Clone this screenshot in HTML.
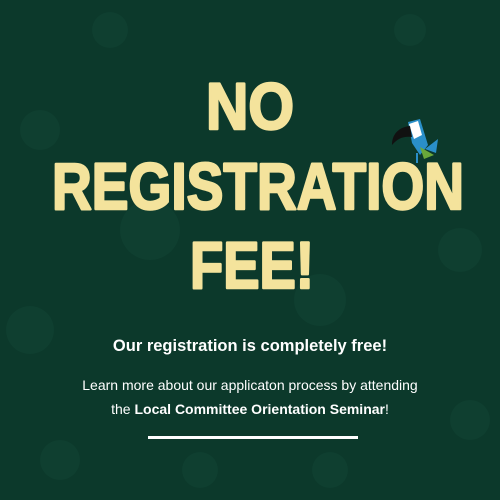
<!DOCTYPE html>
<html><head><meta charset="utf-8"><style>
html,body{margin:0;padding:0}
body{width:500px;height:500px;background:#0c392b;position:relative;overflow:hidden;font-family:"Liberation Sans",sans-serif}
.t{position:absolute;left:0;width:500px;text-align:center;color:#fff}
</style></head><body>
<svg width="500" height="500" style="position:absolute;left:0;top:0">
<g fill="#0f3f30">
<circle cx="110" cy="30" r="18"/><circle cx="410" cy="30" r="16"/><circle cx="40" cy="130" r="20"/>
<circle cx="460" cy="250" r="22"/><circle cx="30" cy="330" r="24"/><circle cx="470" cy="420" r="20"/>
<circle cx="60" cy="460" r="20"/><circle cx="200" cy="470" r="18"/><circle cx="330" cy="470" r="18"/>
<circle cx="150" cy="230" r="30"/><circle cx="320" cy="300" r="26"/>
</g>
<g font-family="Liberation Sans, sans-serif" font-weight="bold" fill="#f4e39c" stroke="#f4e39c" stroke-width="2.5" stroke-linejoin="round">
<text x="206" y="129" font-size="66" textLength="88" lengthAdjust="spacingAndGlyphs">NO</text>
<text x="52" y="209" font-size="66" textLength="412" lengthAdjust="spacingAndGlyphs">REGISTRATION</text>
<text x="190" y="288" font-size="66" textLength="124" lengthAdjust="spacingAndGlyphs">FEE!</text>
</g>
<g transform="translate(370,115)">
<path d="M38 7 L50 4 L58 30 L50 40 L42 28 Z" fill="#2a8fc9"/>
<path d="M39 9 L48 6 L52 20 L44 24 Z" fill="#fff"/>
<path d="M40 11 C30 12 22 18 22 30 C28 23 34 21 42 22 Z" fill="#111"/>
<path d="M50 32 L64 40 L54 44 Z" fill="#6aa83a"/>
<path d="M55 34 L68 24 L66 38 Z" fill="#2a8fc9"/>
<line x1="47" y1="38" x2="47" y2="48" stroke="#2a8fc9" stroke-width="2"/>
</g>
<rect x="148" y="436" width="210" height="3" fill="#fff"/>
</svg>
<div class="t" style="top:337px;font-size:16.5px;font-weight:bold">Our registration is completely free!</div>
<div class="t" style="top:373px;font-size:14px;line-height:24px">Learn more about our applicaton process by attending<br>the <b>Local Committee Orientation Seminar</b>!</div>
</body></html>
